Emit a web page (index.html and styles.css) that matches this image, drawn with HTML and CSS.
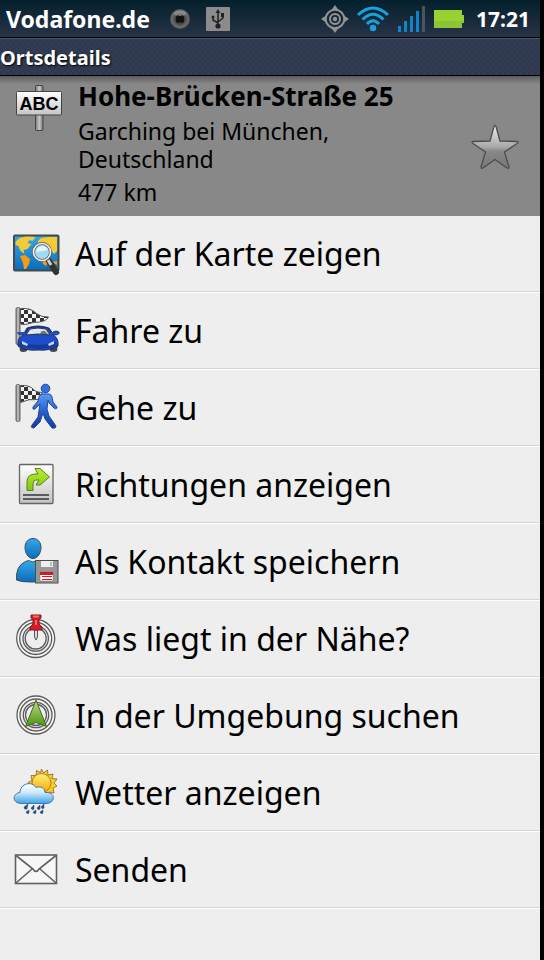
FILE: index.html
```html
<!DOCTYPE html>
<html lang="de">
<head>
<meta charset="utf-8">
<meta name="viewport" content="width=device-width, initial-scale=1">
<title>Ortsdetails</title>
<link rel="stylesheet" href="styles.css">
</head>
<body>
<svg class="defs" width="0" height="0" aria-hidden="true">
  <defs>
    <linearGradient id="blue" x1="0" y1="0" x2="0" y2="1"><stop offset="0" stop-color="#36a9ea"/><stop offset="1" stop-color="#0a6cb8"/></linearGradient>
    <linearGradient id="navy" x1="0" y1="0" x2="0" y2="1"><stop offset="0" stop-color="#5b9bf0"/><stop offset=".5" stop-color="#2462d2"/><stop offset="1" stop-color="#123a9c"/></linearGradient>
    <linearGradient id="metal" x1="0" y1="0" x2="1" y2="0"><stop offset="0" stop-color="#777"/><stop offset=".5" stop-color="#c8c8c8"/><stop offset="1" stop-color="#777"/></linearGradient>
    <linearGradient id="paper" x1="0" y1="0" x2="0" y2="1"><stop offset="0" stop-color="#fff"/><stop offset="1" stop-color="#c4c4c4"/></linearGradient>
    <linearGradient id="lime" x1="0" y1="0" x2="0" y2="1"><stop offset="0" stop-color="#b9ee35"/><stop offset="1" stop-color="#7dc80c"/></linearGradient>
    <linearGradient id="leaf" x1="0" y1="0" x2="0" y2="1"><stop offset="0" stop-color="#b8d98a"/><stop offset="1" stop-color="#4e9414"/></linearGradient>
    <linearGradient id="gold" x1="0" y1="0" x2="0" y2="1"><stop offset="0" stop-color="#fff07a"/><stop offset="1" stop-color="#f6a800"/></linearGradient>
    <linearGradient id="sky" x1="0" y1="0" x2="0" y2="1"><stop offset="0" stop-color="#fff"/><stop offset=".45" stop-color="#cfe9fb"/><stop offset="1" stop-color="#3aa3ea"/></linearGradient>
    <linearGradient id="star" x1="0" y1="0" x2="0" y2="1"><stop offset="0" stop-color="#eee"/><stop offset=".5" stop-color="#a8a8a8"/><stop offset=".6" stop-color="#888"/><stop offset="1" stop-color="#777"/></linearGradient>
    <radialGradient id="ball" cx=".5" cy=".5" r=".5"><stop offset="0" stop-color="#222"/><stop offset=".35" stop-color="#333"/><stop offset=".8" stop-color="#6c6c6c"/><stop offset="1" stop-color="#555"/></radialGradient>
    <pattern id="check" width="8" height="8" patternUnits="userSpaceOnUse"><path fill="#f4f4f4" d="M0 0h8v8H0z"/><path fill="#333" d="M0 0h4v4H0zM4 4h4v4H4z"/></pattern>
  </defs>
</svg>
<div class="screen">
  <div class="status">
    <span class="carrier">Vodafone.de</span>
    <svg class="ball" width="20" height="20" viewBox="0 0 20 20" aria-hidden="true"><circle cx="10" cy="10" r="9.900" fill="url(#ball)"/><ellipse cx="10" cy="4.500" rx="6" ry="3" fill="#bbb" opacity=".45"/><path fill="#111" d="M6 8l1.500-2 1.500 1h2l1.500-1L14 8v5l-2 1-1-1H9l-1 1-2-1z"/></svg>
    <svg class="usb" width="24" height="24" viewBox="0 0 24 24" aria-hidden="true"><rect width="24" height="24" rx="1" fill="#8c8c8c"/><path d="M12 19V5M12 16l-5-3V9M12 15l5-4V7" fill="none" stroke="#222" stroke-width="1.500"/><path fill="#222" d="M12 2l2.500 4h-5zM15 6h3v4h-3z"/><circle cx="7" cy="10" r="1.500" fill="#222"/><circle cx="12" cy="19" r="2.600" fill="#222"/></svg>
    <span class="spacer"></span>
    <svg class="gps" width="28" height="28" viewBox="0 0 28 28" aria-hidden="true"><path fill="#939393" d="M14 0l3.500 5h-7zM14 28l3.500-5h-7zM0 14l5-3.500v7zM28 14l-5-3.500v7z"/><g fill="none" stroke="#939393" stroke-width="2"><circle cx="14" cy="14" r="9.300"/><circle cx="14" cy="14" r="5"/></g><circle cx="14" cy="14" r="2.200" fill="#939393"/></svg>
    <svg class="wifi" width="34" height="26" viewBox="0 0 34 26" aria-hidden="true"><g fill="none" stroke="#18a2dc" stroke-width="3"><path d="M2 9Q17-5 32 9M6.500 13.500Q17 3 27.500 13.500M11 18Q17 11.500 23 18"/></g><circle cx="17" cy="22" r="3.200" fill="#18a2dc"/></svg>
    <svg class="bars" width="28" height="26" viewBox="0 0 28 26" aria-hidden="true"><path fill="#0b86cc" d="M0 20h3v6H0zM6 15h3v11H6zM12 10h3v16h-3zM18 5h3v21h-3z"/><path fill="#4b555d" d="M24 0h3v26h-3z"/></svg>
    <svg class="battery" width="30" height="18" viewBox="0 0 30 18" aria-hidden="true"><path fill="#98d132" d="M0 0h28v5h2v8h-2v5H0z"/><path fill="#82bd38" opacity=".6" d="M0 11h30v2h-2v5H0z"/></svg>
    <time class="clock">17:21</time>
  </div>
  <h1 class="title">Ortsdetails</h1>
  <header class="place">
    <svg class="icon" viewBox="0 0 48 48" aria-hidden="true"><rect x="20.500" y="1.500" width="7.500" height="45" rx="1" fill="url(#metal)" stroke="#444"/><rect x="1.500" y="7.500" width="45" height="23.500" rx="1" fill="url(#paper)" stroke="#444"/><text class="sign" x="24" y="26" text-anchor="middle">ABC</text></svg>
    <div class="info">
      <h2 class="street">Hohe-Brücken-Straße 25</h2>
      <p class="city">Garching bei München, Deutschland</p>
      <p class="distance">477 km</p>
    </div>
    <button class="favorite" type="button" aria-label="Favorit"><svg class="icon" viewBox="0 0 48 48" aria-hidden="true"><path d="M23 2.500q1-2 2 0L29 17l17 .5q2 .5 0 2L33.500 28 38 43q0 2-2 1l-12-8.500L12 44q-2 1-2-1l4.500-15L2 19.500q-2-1.500 0-2L19 17z" fill="url(#star)" stroke="#4c4c4c" stroke-width="1.300"/></svg></button>
  </header>
  <nav class="menu">
    <a class="row" href="#karte">
      <svg class="icon" viewBox="0 0 48 48" aria-hidden="true"><rect x="2" y="6.500" width="44.500" height="35" rx="1" fill="url(#blue)" stroke="#484848" stroke-width="2"/><path fill="#f4ca35" d="M3.500 13l4-4 7-1.500 9 .5-3 4-3-1-2 3 4 1-4 5-4 1 1 4-4-3-2-5-3-1zM26 12l3-3 7-1 9 0v14l-3 3-3-4-4 2-3-4-4 1-2-4z"/><path fill="#f59b18" d="M8 27l5-1 5 4-1 5-3 5h-2l-1-6zM29 27l7-2 1 6-3 6-3-2zM40 33l5-1v4z"/><path d="M37 32l7 11" stroke="#333" stroke-width="6" stroke-linecap="round"/><path d="M36 31l3 5" stroke="#ccc" stroke-width="3"/><circle cx="30" cy="23" r="8.500" fill="#a2daf5" stroke="#555" stroke-width="3"/><circle cx="30" cy="23" r="8.500" fill="none" stroke="#eee" stroke-width="1.700"/><path fill="#e4f7ff" d="M24 23q1-6 7-6 4 1 5 4z"/></svg>
      <span>Auf der Karte zeigen</span>
    </a>
    <a class="row" href="#fahren">
      <svg class="icon" viewBox="0 0 48 48" aria-hidden="true"><rect x="4" y="1.500" width="4" height="37" rx="1.500" fill="url(#metal)" stroke="#666"/><path d="M8.500 2.500q10-1 16 5 5 4 12 3.500-2 4-9 5-7 0-12 2-4 1-7 0z" fill="url(#check)" stroke="#555"/><path d="M7 37h8v8q-4 2-7 0zM38 37h8l-1 8q-4 2-7 0z" fill="#444"/><path d="M6 26q-1 3 5 3l4-7q11-4 22 0l5 7q6 0 5-3-3-2-6 0" fill="#2450c8" stroke="#223c80"/><path d="M6 40q-1-9 6-11l4-7q10-3 20 0l5 7q6 3 5 11-8 5-20 4-13 1-20-4z" fill="#1e4ccc" stroke="#1b2d60"/><path fill="#dfeaf0" stroke="#333" d="M14 29l4-6q8-2 16 0l4 6q-12-2-24 0z"/><path fill="#777" d="M28 28q1-4 5-3l3 3z"/><path fill="#163a99" d="M8 36q18 6 36 0l1 4q-18 6-38 0z"/><path fill="#cdd6df" d="M10 35l6 3-1 2-5-2zM42 35l-6 3 1 2 5-2z"/></svg>
      <span>Fahre zu</span>
    </a>
    <a class="row" href="#gehen">
      <svg class="icon" viewBox="0 0 48 48" aria-hidden="true"><rect x="4" y="1.500" width="4" height="37" rx="1.500" fill="url(#metal)" stroke="#666"/><path d="M8.500 2.500q9-1 14 5 3 2 8 2l-4 7q-10-1-18 3z" fill="url(#check)" stroke="#555"/><circle cx="33.500" cy="5.500" r="4.300" fill="#2e70dc" stroke="#24479b"/><path d="M29 11h8q2 0 3 3l1 5 4 5q0 3-3 1l-5-5-1-3-1 9 2 7 7 10q0 3-4 2l-7-9-2-6-3 9-6 6q-4 0-2-3l6-8 2-13-5 5q-3 1-2-2l5-6q1-6 3-7z" fill="url(#navy)" stroke="#24479b"/></svg>
      <span>Gehe zu</span>
    </a>
    <a class="row" href="#richtungen">
      <svg class="icon" viewBox="0 0 48 48" aria-hidden="true"><rect x="7.500" y="4.500" width="33.500" height="39" rx="1" fill="url(#paper)" stroke="#666" stroke-width="1.300"/><path d="M15 30.500V22q0-8 9-8h2l-3-5.500h5L37.500 17 28 25h-4l3-5h-3q-3 0-3 4v6.500z" fill="url(#lime)" stroke="#5f7d22"/><path stroke="#5c5c5c" stroke-width="2" d="M11 35h26M11 39h26"/></svg>
      <span>Richtungen anzeigen</span>
    </a>
    <a class="row" href="#kontakt">
      <svg class="icon" viewBox="0 0 48 48" aria-hidden="true"><path d="M4.500 43q-1-14 9-18.500l3-1q4 3 9 0h4V45H18Q9 45 4.500 43z" fill="url(#blue)" stroke="#3d4c56"/><path d="M21 1.500c5 0 8 4 8 9s-3 11-8 11-8-6-8-11 3-9 8-9z" fill="url(#blue)" stroke="#3d4c56"/><rect x="23.500" y="23.500" width="22.500" height="22.500" fill="#979797" stroke="#4e4e4e"/><path fill="#eee" d="M29 24h12v6H29z"/><path fill="#bbb" d="M38 25h2v4h-2z"/><path fill="#fff" stroke="#777" stroke-width=".6" d="M28 35h13v9H28z"/><path fill="#d41820" d="M28 35h13v3H28zM30 39h10v1H30zM30 42h10v1H30z"/></svg>
      <span>Als Kontakt speichern</span>
    </a>
    <a class="row" href="#naehe">
      <svg class="icon" viewBox="0 0 48 48" aria-hidden="true"><g fill="none" stroke="#5c5c5c" stroke-width="1.300"><circle cx="23.700" cy="24.500" r="17.700" stroke="#f8f8f8" stroke-width="3"/><circle cx="23.700" cy="24.500" r="19"/><circle cx="23.700" cy="24.500" r="16"/><circle cx="23.700" cy="24.500" r="12.700"/><circle cx="23.700" cy="24.500" r="10.500"/></g><path d="M22.500 16h3v7l-1.500 3-1.500-3z" fill="#ddd" stroke="#555"/><path d="M19 1h10v3l-2 1v5l3 3v3H18v-3l3-3V5l-2-1z" fill="#dd1824" stroke="#742127"/><path fill="#f36b6c" d="M21 1.500h6v2h-6zM23 6h2v5h-2z"/></svg>
      <span>Was liegt in der Nähe?</span>
    </a>
    <a class="row" href="#umgebung">
      <svg class="icon" viewBox="0 0 48 48" aria-hidden="true"><g fill="none" stroke="#5c5c5c" stroke-width="1.300"><circle cx="24" cy="24" r="17.700" stroke="#f8f8f8" stroke-width="3"/><circle cx="24" cy="24" r="19"/><circle cx="24" cy="24" r="16"/><circle cx="24" cy="24" r="12.700"/><circle cx="24" cy="24" r="10.500"/></g><path d="M24 9l10.500 26.500L24 31.500l-10.500 4z" fill="url(#leaf)" stroke="#476a25"/></svg>
      <span>In der Umgebung suchen</span>
    </a>
    <a class="row" href="#wetter">
      <svg class="icon" viewBox="0 0 48 48" aria-hidden="true"><path d="M29.500 1l2 4 4-3 .5 5 5-1-1 4.500 5 .5-3 4 3 3-4 2 1 5-5-1-1 5-4-3-3 3-2.500-4-4 2-.5-5-5-.5 2-4-3-3 4-2-1-5 5 0 .5-5 4 2z" fill="#ffc928" stroke="#806629" stroke-width=".8"/><circle cx="29.500" cy="15" r="9.500" fill="url(#gold)" stroke="#b07d1c"/><path d="M9 35.500C0 35 0 25.500 8 24.500c0-9 12-12 16-5 5-2 9 1 9 5 11-1 11 11 1 11z" fill="url(#sky)" stroke="#43789d"/><path fill="#28528e" stroke="#24466f" stroke-width=".5" d="M16 36l-4 3q0 3 3 2zM22 37l-3 3q1 3 3 1zM28 37l-3 3q1 3 3 1zM32 36l-3 3q1 3 3 1zM17 42l-3 2q1 3 3 1zM24 42l-3 2q1 3 3 1zM31 42l-3 2q1 3 3 1z"/></svg>
      <span>Wetter anzeigen</span>
    </a>
    <a class="row" href="#senden">
      <svg class="icon" viewBox="0 0 48 48" aria-hidden="true"><rect x="3.500" y="10" width="41" height="28.500" fill="#f7f7f7" stroke="#606060" stroke-width="1.600"/><path d="M4 10.500L21 24q3 5 6 0l17-13.500M4 38l16-14M44 38L28 24" fill="none" stroke="#606060" stroke-width="1.600"/></svg>
      <span>Senden</span>
    </a>
  </nav>
</div>
</body>
</html>
```
FILE: styles.css
```css
* {
  box-sizing: border-box;
}

body {
  margin: 0;
  padding-right: 4px;
  background: #000;
  color: #000;
  font-family: "Noto Sans", "Open Sans", sans-serif;
}

h1, h2, p {
  margin: 0;
}

.defs {
  position: absolute;
}

.screen {
  min-height: 100vh;
  background: #eee;
}

.status {
  display: flex;
  align-items: center;
  height: 38px;
  padding: 0 10px 0 6px;
  border-bottom: 1px solid #000;
  background: linear-gradient(#04202c, #283347);
  color: #fff;
  font-weight: 700;
}

.carrier {
  font-size: 23px;
}

.ball {
  margin-left: 20px;
}

.usb {
  margin-left: 16px;
}

.spacer {
  flex: 1;
}

.wifi {
  margin-left: 7px;
}

.bars {
  margin-left: 8px;
}

.battery {
  margin-left: 8px;
}

.clock {
  margin-left: 12px;
  font-size: 21px;
}

.title {
  height: 38px;
  border-top: 1px solid #4b566b;
  border-bottom: 1px solid #000;
  background: repeating-conic-gradient(#2e384e 0 25%, #333c52 0 50%) 0 0 / 6px 6px;
  color: #fff;
  font-size: 20px;
  line-height: 37px;
  text-shadow: 1px 1px 2px #000;
}

.place {
  display: flex;
  align-items: flex-start;
  min-height: 140px;
  padding: 8px 21px 4px 15px;
  background: linear-gradient(#5c5c5c, #888 8px);
}

.icon {
  display: block;
  flex: none;
  width: 48px;
  height: 48px;
}

.sign {
  font: 700 18px "Liberation Sans", sans-serif;
}

.info {
  flex: 1;
  padding: 0 60px 0 15px;
}

.street {
  font-size: 26px;
  line-height: 24px;
  white-space: nowrap;
}

.city {
  margin-top: 9px;
  font-size: 23px;
  line-height: 28px;
}

.distance {
  margin-top: 5px;
  font-size: 23px;
  line-height: 28px;
}

.favorite {
  align-self: center;
  padding: 0;
  border: 0;
  background: none;
}

.row {
  display: flex;
  align-items: center;
  gap: 15px;
  height: 77px;
  padding: 0 0 2px 12px;
  border-bottom: 1px solid #fff;
  box-shadow: inset 0 -1px #d4d4d4;
  color: #000;
  font-size: 32px;
  text-decoration: none;
}
```
